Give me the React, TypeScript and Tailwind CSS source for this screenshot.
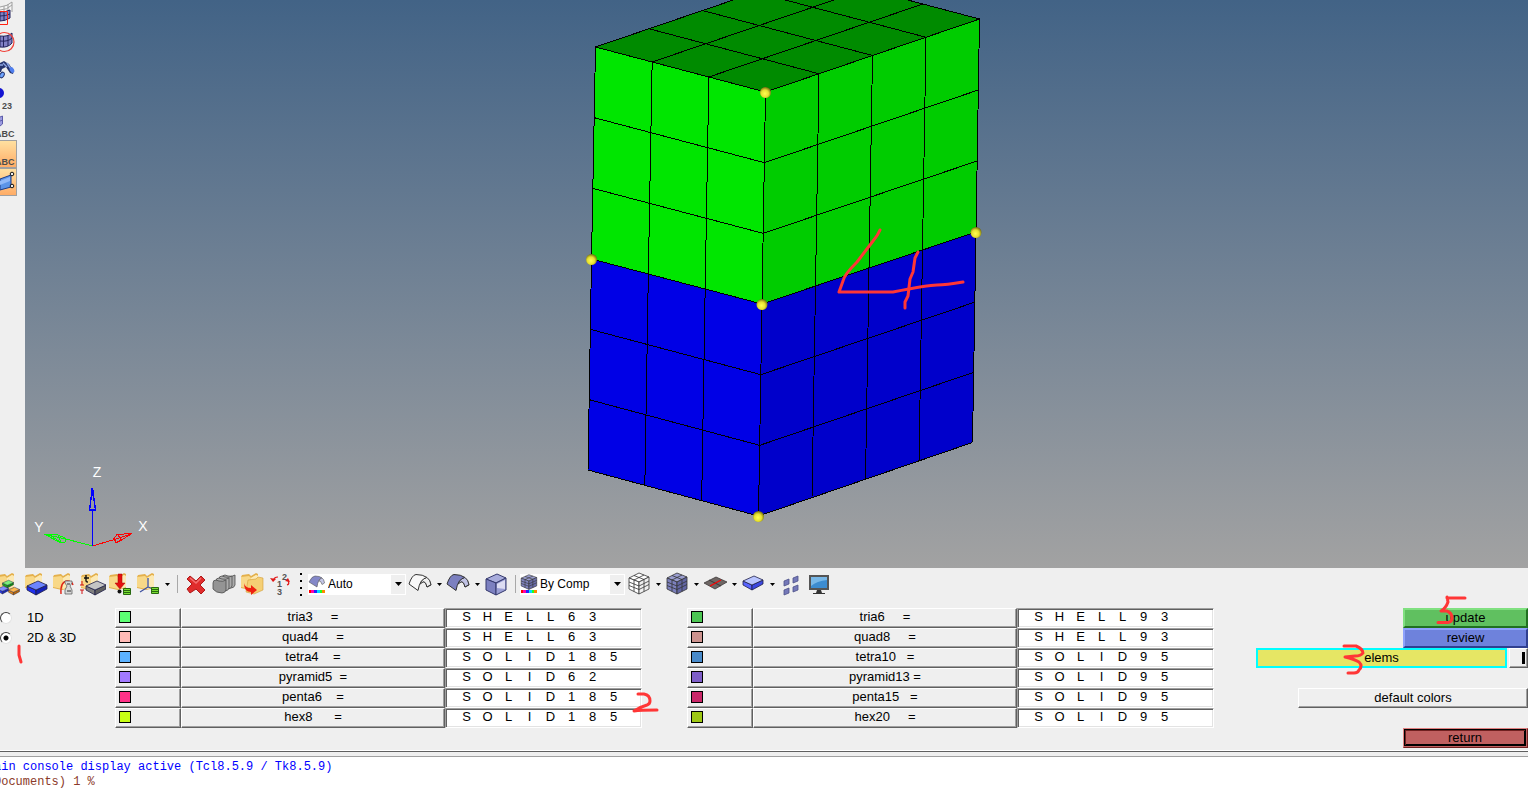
import React, { useState } from 'react'

type Point = [number, number];

interface ElementType {
    name: string;
    color: string;
    value: string;
}

const leftTypes: ElementType[] = [
    { name: "tria3", color: "bg-[#5cff74]", value: "SHELL63" },
    { name: "quad4", color: "bg-[#ffbab6]", value: "SHELL63" },
    { name: "tetra4", color: "bg-[#5cb2ff]", value: "SOLID185" },
    { name: "pyramid5", color: "bg-[#a27aff]", value: "SOLID62" },
    { name: "penta6", color: "bg-[#ff3288]", value: "SOLID185" },
    { name: "hex8", color: "bg-[#c8ff14]", value: "SOLID185" },
];

const rightTypes: ElementType[] = [
    { name: "tria6", color: "bg-[#4cc653]", value: "SHELL93" },
    { name: "quad8", color: "bg-[#cc928e]", value: "SHELL93" },
    { name: "tetra10", color: "bg-[#488aca]", value: "SOLID95" },
    { name: "pyramid13", color: "bg-[#7e5ec8]", value: "SOLID95" },
    { name: "penta15", color: "bg-[#ca2869]", value: "SOLID95" },
    { name: "hex20", color: "bg-[#9ec814]", value: "SOLID95" },
];

const raised = "border border-t-white border-l-white border-b-[#606060] border-r-[#606060] shadow-[inset_-1px_-1px_#a0a0a0]";

// ---------- mesh ----------

const mix = (a: Point, b: Point, t: number): Point => [a[0] + (b[0] - a[0]) * t, a[1] + (b[1] - a[1]) * t];

// one face of the solid: corners run a-b along the top and d-c along the bottom
const Face = ({ a, b, c, d, cols, rows, fill }: { a: Point; b: Point; c: Point; d: Point; cols: number; rows: number; fill: string }) => {
    const lines: [Point, Point][] = [];
    for (let i = 0; i <= cols; i++) lines.push([mix(a, b, i / cols), mix(d, c, i / cols)]);
    for (let j = 0; j <= rows; j++) lines.push([mix(a, d, j / rows), mix(b, c, j / rows)]);
    return (
        <g shapeRendering="crispEdges">
            <polygon points={[a, b, c, d].join(" ")} fill={fill} />
            {lines.map(([p, q], i) => (
                <line key={i} x1={p[0]} y1={p[1]} x2={q[0]} y2={q[1]} stroke="#000" />
            ))}
        </g>
    )
}

const topLeft: Point = [595.5, 47];
const topFront: Point = [765.5, 92];
const topRight: Point = [979.5, 19];
const topBack: Point = [809.5, -26];
const midLeft: Point = [591.5, 259];
const midFront: Point = [762, 304];
const midRight: Point = [976, 232];
const lowLeft: Point = [588, 470];
const lowFront: Point = [758.5, 516];
const lowRight: Point = [972.5, 442.5];

const Viewport = () => (
    <svg viewBox="25 0 1503 568" preserveAspectRatio="xMidYMid slice" className="block w-full h-full" role="img" aria-label="Mesh view">
        <defs>
            <radialGradient id="node" cx="45%" cy="60%" r="60%">
                <stop offset="0" stopColor="#ffff50" />
                <stop offset="0.55" stopColor="#e6e030" />
                <stop offset="1" stopColor="#6e6a10" />
            </radialGradient>
        </defs>
        <Face a={topLeft} b={topFront} c={topRight} d={topBack} cols={3} rows={4} fill="#008b00" />
        <Face a={topLeft} b={topFront} c={midFront} d={midLeft} cols={3} rows={3} fill="#00e600" />
        <Face a={topFront} b={topRight} c={midRight} d={midFront} cols={4} rows={3} fill="#00cc00" />
        <Face a={midLeft} b={midFront} c={lowFront} d={lowLeft} cols={3} rows={3} fill="#0000e6" />
        <Face a={midFront} b={midRight} c={lowRight} d={lowFront} cols={4} rows={3} fill="#0000cb" />
        {[topFront, midLeft, midFront, midRight, lowFront].map(([x, y], i) => (
            <circle key={i} cx={x} cy={y + 0.5} r="5.5" fill="url(#node)" />
        ))}
        {/* axis triad */}
        <g fill="none" shapeRendering="crispEdges">
            <path d="M92.5 546L64 538.500M44 534l14 1 7 3v4l-4 1zM44 534l21 5M50 535l10 7M58 535l3 7" stroke="#0f0" />
            <path d="M92.5 546L116 539M132 533.5l-15 1-3 4 2 4 3-1zM131 534l-15 5M118 535l3 4-3 3" stroke="#f00" />
            <path d="M92.5 546v-36" stroke="#00f" />
            <path d="M92.5 488l-3 22h6zM92 488v8" stroke="#00f" strokeWidth="1.4" />
        </g>
        <g fill="none" stroke="#ff3636" strokeWidth="3" strokeLinecap="round" strokeLinejoin="round">
            <path d="M880 230q-2 5-7 11l-16 21q-13 13-14 19l-4 11h54q35-7 44-7t26-3" />
            <path d="M918 252l-3 6-2 14-3 7-2 17-3 6v6" />
        </g>
        <g fill="#fff" fontFamily="Liberation Sans, sans-serif" fontSize="14" textAnchor="middle">
            <text x="97" y="477">Z</text>
            <text x="39" y="532">Y</text>
            <text x="143" y="531">X</text>
        </g>
    </svg>
)

// ---------- side bar ----------

const SideButton = ({ label, active, children }: { label: string; active?: boolean; children: React.ReactNode }) => (
    <button
        aria-label={label}
        className={`block h-7 w-[17px] overflow-hidden ${active ? "bg-linear-to-b from-[#ffe0a0] to-[#ffac66] border-y border-r border-[#a0a0a0]" : ""}`}
    >
        <svg viewBox="0 0 17 28" className="block w-[17px] h-full" preserveAspectRatio="xMinYMid slice">{children}</svg>
    </button>
)

const sideText = { fontFamily: "Liberation Sans, sans-serif", fontSize: 9, fontWeight: 700, fill: "#4c4c4c" };

const SideBar = () => (
    <aside className="w-[25px] shrink-0 bg-[#efefef]">
        <SideButton label="Window zoom">
            <path d="M0 7q8-1 12-5v13q-5 4-12 5z" fill="#f4f4f4" />
            <path d="M0 7q8-1 12-5v10M4 6v8M8 4v9M0 10q7 0 12-5" fill="none" stroke="#a0a0a0" />
            <path d="M0 12q6 0 10-2v8q-5 3-10 3z" fill="#8080c4" stroke="#24245c" />
            <path d="M4 11v10M0 16q6 0 10-2" fill="none" stroke="#24245c" />
            <path d="M0 11.500h7.500v13H0" fill="none" stroke="#ff2010" />
        </SideButton>
        <SideButton label="Circle zoom">
            <path d="M0 8q8 1 12-3v10q-4 5-12 4z" fill="#8080c4" stroke="#24245c" />
            <path d="M3.500 8v11M8 7v11M0 13q8 1 12-3" fill="none" stroke="#24245c" />
            <circle cx="4.500" cy="14" r="9.500" fill="none" stroke="#f04038" strokeWidth="1.200" />
        </SideButton>
        <SideButton label="Find">
            <path d="M0 7l4-2 3 2 2 1 2 3 3 3-1 4-3-1-4-6-4 2-1 3-1 0z" fill="#26346e" />
            <path d="M3 7l4 4M7 7l4 6M0 9h3" stroke="#8ea6e4" strokeWidth="1.400" />
            <ellipse cx="12" cy="14" rx="2" ry="3" transform="rotate(-30 12 14)" fill="#4f7ff0" />
            <ellipse cx="2" cy="19" rx="2" ry="3" transform="rotate(30 2 19)" fill="#6ea4ff" stroke="#26346e" />
        </SideButton>
        <SideButton label="Node numbers">
            <circle cx="-1" cy="9" r="5" fill="#1414d2" />
            <text x="2" y="25" {...sideText}>23</text>
        </SideButton>
        <SideButton label="Element labels">
            <path d="M0 5l2.500-1v8L0 14M0 9l3-1" fill="#9c9ce0" stroke="#5c5caa" />
            <text x="-5" y="25" {...sideText}>ABC</text>
        </SideButton>
        <SideButton label="Component labels" active>
            <text x="-5" y="25" {...sideText}>ABC</text>
        </SideButton>
        <SideButton label="Surface points" active>
            <path d="M0 11l11-4v12l-11 3z" fill="#5c94e8" stroke="#1c3c88" />
            <path d="M0 13l10-4v4L0 17z" fill="#90b8f8" />
            <circle cx="12" cy="6" r="1.800" fill="#eee" stroke="#111" />
            <circle cx="12" cy="18" r="1.800" fill="#eee" stroke="#111" />
        </SideButton>
    </aside>
)

// ---------- tool bar ----------

const Folder = () => (
    <>
        <path d="M3 5l1-2 7-1 2 2 5-3 2 1v14l-8 2-9-2z" fill="#e4b04c" />
        <path d="M3 5l8-1 2 2 5-3 2 1v11l-8 2-9-2z" fill="#f8d888" />
        <path d="M13 6l5-3 2 1v11l-7 2z" fill="#fce9b4" />
    </>
)

const Slab = ({ x, y, s = 1, top, left, right }: { x: number; y: number; s?: number; top: string; left: string; right: string }) => (
    <g transform={`translate(${x} ${y}) scale(${s})`} stroke="#202048" strokeWidth="0.800" strokeLinejoin="round">
        <path d="M-10 0v4l9 5V4z" fill={left} />
        <path d="M-1 4v5l11-6v-4z" fill={right} />
        <path d="M-10 0L1-5l9 4L-1 4z" fill={top} />
    </g>
)

const MeshCube = ({ top, left, right }: { top: string; left: string; right: string }) => (
    <g stroke="#333" strokeWidth="0.800" strokeLinejoin="round">
        <path d="M4 6l10-5 10 4-10 5z" fill={top} />
        <path d="M4 6l10 4v12L4 17z" fill={left} />
        <path d="M14 10l10-5v12l-10 5z" fill={right} />
        <path d="M9 3.500l10 4v12M19 3L9 8v11.500M4 10l10 4 10-5M4 13.500l10 4 10-5" fill="none" />
    </g>
)

const Surface = ({ fill, inner }: { fill: string; inner: string }) => (
    <g stroke="#333" strokeLinejoin="round">
        <path d="M14 12q3-7 7-6 3 2 4 7l-4 2q-1-6-4-5z" fill={inner} />
        <path d="M3 12Q6 3 10 2.500q7 0 11 3-7 1-9 13z" fill={fill} />
        <path d="M21 5.500q3 2 4 7l-4 2.500q-1-5-3.500-5.500" fill={inner} />
    </g>
)

const IconButton = ({ label, children }: { label: string; children: React.ReactNode }) => (
    <button aria-label={label} className="w-7 h-6 shrink-0">
        <svg viewBox="0 0 28 24" className="block w-7 h-6">{children}</svg>
    </button>
)

const MoreButton = ({ label }: { label: string }) => (
    <button aria-label={label} className="flex w-2.5 h-6 shrink-0 items-center justify-center">
        <svg viewBox="0 0 5 3" className="w-[5px] h-[3px]"><path d="M0 0h5L2.500 3z" /></svg>
    </button>
)

const Separator = () => (
    <div className="flex w-2.5 shrink-0 justify-center"><div className="w-px h-[18px] bg-[#a8a8a8]" /></div>
)

const Combo = ({ label, option, width, children }: { label: string; option: string; width: string; children: React.ReactNode }) => (
    <div className={`relative shrink-0 flex h-[21px] bg-white ${width}`}>
        <select aria-label={label} className="appearance-none w-full h-full pl-5 text-[12px] outline-none">
            <option>{option}</option>
        </select>
        <svg viewBox="0 0 18 20" className="absolute left-0 top-0 w-[18px] h-5 pointer-events-none">
            {children}
            <path d="M1 16h2v3H1z" fill="#f00" />
            <path d="M3 16h3v3H3z" fill="#f0a" />
            <path d="M6 16h3v3H6z" fill="#22f" />
            <path d="M9 16h3v3H9z" fill="#0df" />
            <path d="M12 16h2v3h-2z" fill="#2f2" />
            <path d="M14 16h3v3h-3z" fill="#f80" />
        </svg>
        <span className="absolute right-px inset-y-px w-3.5 bg-[#efefef] flex items-center justify-center pointer-events-none">
            <svg viewBox="0 0 7 4" className="w-[7px] h-1"><path d="M0 0h7L3.500 4z" /></svg>
        </span>
    </div>
)

const ToolBar = () => (
    <div className="flex items-center h-8 -ml-1.5 shrink-0">
        <IconButton label="Assemblies">
            <Folder />
            <Slab x={14} y={11} s={0.55} top="#7cf07c" left="#18b018" right="#109010" />
            <Slab x={9} y={17} s={0.55} top="#8090ff" left="#2838e8" right="#1a28b0" />
            <Slab x={20} y={18} s={0.55} top="#ffb850" left="#e08818" right="#b86808" />
        </IconButton>
        <IconButton label="Components">
            <Folder />
            <Slab x={15} y={14} top="#6c84ff" left="#2030f0" right="#1420b8" />
        </IconButton>
        <IconButton label="Materials">
            <Folder />
            <path d="M11 22q-1-12 6-13 5 0 6 4" fill="none" stroke="#e02418" strokeWidth="1.400" />
            <path d="M15 9h7v2l-2 3 2 4v4h-7v-4l2-4-2-3z" fill="#d8d8d8" stroke="#555" strokeWidth="0.700" />
            <path d="M17 12h3M17 19h4" stroke="#333" />
        </IconButton>
        <IconButton label="Properties">
            <Folder />
            <Slab x={18} y={14} top="#c4c4c4" left="#808080" right="#606060" />
            <path d="M6 6h5M8 3v6q0 1 2 1" fill="none" stroke="#111" strokeWidth="1.400" />
            <path d="M2 13h4M2 18h4M4 9v4M4 18v4" stroke="#d01010" />
        </IconButton>
        <IconButton label="Load collectors">
            <Folder />
            <path d="M12 2h4v9h3l-5 6-5-6h3z" fill="#e41010" stroke="#a00" strokeWidth="0.500" />
            <circle cx="13.500" cy="19.500" r="2" fill="#111" />
            <path d="M17.500 16.500h7v6h-7z" fill="#78dc30" stroke="#286810" />
            <path d="M18 18.500h6M18 20.500h6" stroke="#286810" />
        </IconButton>
        <IconButton label="System collectors">
            <Folder />
            <path d="M14 6v9l-8 5M14 15l9 3" fill="none" stroke="#3d50a0" strokeWidth="1.300" />
            <path d="M17.500 15.500h7v6h-7z" fill="#78dc30" stroke="#286810" />
            <path d="M18 17.500h6M18 19.500h6" stroke="#286810" />
        </IconButton>
        <MoreButton label="More collectors" />
        <Separator />
        <IconButton label="Delete">
            <path d="M8 4l6 5 5-5 4 4-5 5 5 5-4 4-5-5-6 4-3-4 5-5-5-5z" fill="#e02c2c" stroke="#b01818" strokeLinejoin="round" />
            <path d="M8 6l6 5 5-5" fill="none" stroke="#f47070" strokeWidth="1.500" />
        </IconButton>
        <IconButton label="Card edit">
            {[[9, -2], [6, -1], [3, 1], [0, 3]].map(([x, y], i) => (
                <path key={i} transform={`translate(${x} ${y})`} d="M3 8q0-3 3-3l3 1q4 1 7-1v10q-1 3-4 3-6 0-9-4z" fill={i === 3 ? "#949494" : "#acacac"} stroke="#4c4c4c" strokeWidth="0.800" />
            ))}
        </IconButton>
        <IconButton label="Organize">
            <Folder />
            <path d="M10 8l8-1 2-2 5 1v12l-9 4-8-2z" fill="#f5cf74" stroke="#d29c38" strokeWidth="0.600" />
            <path d="M6 11q1 5 7 5v-3l6 5-6 5v-3Q6 20 6 11z" fill="#ee2010" />
        </IconButton>
        <IconButton label="Renumber">
            <g fontFamily="Liberation Sans, sans-serif" fontSize="9" fontWeight="700" fill="#555">
                <text x="16" y="8">2</text>
                <text x="11" y="15">1</text>
                <text x="11" y="23">3</text>
            </g>
            <path d="M12 5q-4 0-5 4M21 13q3-1 1-4" fill="none" stroke="#e01818" strokeWidth="1.200" />
            <path d="M4 6l6 1-3 3zM19 9l3-3 2 4z" fill="#e01818" />
        </IconButton>
        <div className="w-3.5 shrink-0 flex flex-col items-center gap-[5px]">
            <div className="size-0.5 bg-black" />
            <div className="size-0.5 bg-black" />
            <div className="size-0.5 bg-black" />
            <div className="size-0.5 bg-black" />
        </div>
        <Combo label="Geometry color mode" option="Auto" width="w-[98px]">
            <path d="M1 8q3-6 6-6 5 0 7 2-4 1-5 9z" fill="#8488c8" stroke="#555" strokeWidth="0.600" />
            <path d="M14 4q2 1 2.500 5l-2.500 1.500q-1-4-3-3.500 1-3 3-3z" fill="#c4c6e8" stroke="#555" strokeWidth="0.600" />
        </Combo>
        <IconButton label="Wireframe geometry"><Surface fill="#f8f8f8" inner="#efefef" /></IconButton>
        <MoreButton label="Wireframe geometry options" />
        <IconButton label="Shaded geometry"><Surface fill="#7c80c0" inner="#c0c2e4" /></IconButton>
        <MoreButton label="Shaded geometry options" />
        <IconButton label="Transparency">
            <g stroke="#34386c" strokeLinejoin="round">
                <path d="M4 7l11-5 9 4-10 5z" fill="#a8acdc" />
                <path d="M4 7l10 4v12L4 18z" fill="#7c80c0" />
                <path d="M14 11l10-5v12l-10 5z" fill="#9a9ed4" />
                <path d="M15 12l8-4v9l-8-1z" fill="#dcdcf2" stroke="none" />
            </g>
        </IconButton>
        <Separator />
        <Combo label="Element color mode" option="By Comp" width="w-[105px]">
            <g transform="translate(-2 0) scale(0.78 0.7)">
                <MeshCube top="#9a9ed0" left="#8084c0" right="#6a6eac" />
            </g>
        </Combo>
        <IconButton label="Wireframe elements"><MeshCube top="#fff" left="#fff" right="#f0f0f0" /></IconButton>
        <MoreButton label="Wireframe element options" />
        <IconButton label="Shaded elements"><MeshCube top="#9a9ed0" left="#7c80bc" right="#6266a4" /></IconButton>
        <MoreButton label="Shaded element options" />
        <IconButton label="Feature lines">
            <path d="M3 11l12-6 11 5-12 7z" fill="#6e6664" stroke="#3c3838" strokeWidth="0.800" />
            <path d="M8 8l12 6" stroke="#3c3838" />
            <path d="M9 14l11-6" stroke="#f00" strokeWidth="1.200" />
        </IconButton>
        <MoreButton label="Feature line options" />
        <IconButton label="Element representation">
            <Slab x={14} y={9} top="#b8c4ff" left="#5864ff" right="#3c48e0" />
        </IconButton>
        <MoreButton label="Element representation options" />
        <IconButton label="Shrink elements">
            {[[7, 8], [16, 5], [7, 17], [16, 14]].map(([x, y], i) => (
                <path key={i} transform={`translate(${x} ${y})`} d="M0 1l5-2v5l-5 2z" fill="#7478b8" stroke="#4c5088" strokeWidth="0.800" />
            ))}
        </IconButton>
        <IconButton label="Visualization options">
            <path d="M4 3h20v15H4z" fill="#555" />
            <path d="M6 5h16v11H6z" fill="#3c8cd0" />
            <path d="M6 5h16v3Q12 9 6 14z" fill="#78b8e8" />
            <path d="M12 18h4l1 3h3v1H8v-1h3z" fill="#333" />
        </IconButton>
    </div>
)

// ---------- element type panel ----------

const TypeColumn = ({ types }: { types: ElementType[] }) => (
    <div className="flex flex-col">
        {types.map((type) => (
            <div key={type.name} className="grid h-5 grid-cols-[66px_264px_197px]">
                <button aria-label={`${type.name} color`} className={`flex items-start pl-[3px] pt-0.5 ${raised}`}>
                    <span className={`size-3 border border-black ${type.color}`} />
                </button>
                <label htmlFor={`${type.name}-0`} className={`text-center whitespace-pre leading-4 ${raised}`}>
                    {type.name.padEnd(10) + "="}
                </label>
                <div className="flex items-start bg-white pl-2.5 border border-t-[#a0a0a0] border-l-[#a0a0a0] border-b-white border-r-white shadow-[inset_1px_1px_#606060,inset_-1px_-1px_#e3e3e3]">
                    {type.value.split("").map((char, i) => (
                        <input
                            key={i}
                            id={`${type.name}-${i}`}
                            aria-label={`${type.name} character ${i + 1}`}
                            maxLength={1}
                            defaultValue={char}
                            className="w-[21px] h-4 leading-4 text-center bg-transparent outline-none"
                        />
                    ))}
                </div>
            </div>
        ))}
    </div>
)

const App = () => {
    const [dimension, setDimension] = useState("2D & 3D");

    return (
        <div className="flex flex-col h-screen overflow-hidden bg-[#efefef] text-black text-[13px] font-['Liberation_Sans',sans-serif]">
            <div className="flex flex-1 min-h-0">
                <SideBar />
                <main className="flex-1 min-w-0 bg-linear-to-b from-[#426386] to-[#a2a2a2]">
                    <Viewport />
                </main>
            </div>

            <ToolBar />

            <section className="relative flex shrink-0 pt-2 pb-0.5">
                <div className="w-[115px] shrink-0">
                    {["1D", "2D & 3D"].map((option) => (
                        <label key={option} className="flex items-center h-5 gap-[15px]">
                            <input
                                type="radio"
                                name="dimension"
                                checked={dimension === option}
                                onChange={() => setDimension(option)}
                                className="appearance-none size-3 rounded-full bg-white border border-t-[#404040] border-l-[#404040] border-b-[#e3e3e3] border-r-[#e3e3e3] checked:bg-[radial-gradient(circle,#000_2px,#fff_3px)]"
                            />
                            {option}
                        </label>
                    ))}
                </div>
                <div className="flex gap-[45px]">
                    <TypeColumn types={leftTypes} />
                    <TypeColumn types={rightTypes} />
                </div>

                <div className="relative ml-auto w-[272px] shrink-0 flex flex-col items-end">
                    <button className="h-5 w-[125px] bg-[#60c060] border-2 border-t-[#80e080] border-l-[#80e080] border-b-[#207020] border-r-[#207020] leading-4">update</button>
                    <button className="h-5 w-[125px] bg-[#6e82dc] border-2 border-t-[#8ea2fc] border-l-[#8ea2fc] border-b-[#304090] border-r-[#304090] leading-4">review</button>
                    <div className="flex w-full h-5 gap-0.5">
                        <button className="w-[251px] bg-[#e6e664] border-2 border-[#00ffff] leading-4">elems</button>
                        <button aria-label="Reset selection" className={`flex-1 flex items-center justify-end pr-0.5 ${raised}`}>
                            <span className="w-[3px] h-3 bg-black" />
                        </button>
                    </div>
                    <button className={`mt-5 h-5 w-[230px] leading-4 ${raised}`}>default colors</button>
                    <button className="mt-5 h-5 w-[125px] bg-[#c06060] border border-t-[#e08080] border-l-[#e08080] border-b-[#702020] border-r-[#702020] pr-px pb-px">
                        <span className="block border border-black leading-[15px] shadow-[inset_1px_1px_#702020,inset_-1px_-1px_#000]">return</span>
                    </button>
                    <svg viewBox="1256 608 272 140" className="absolute left-0 top-0 w-[272px] h-[140px] overflow-visible pointer-events-none" fill="none" stroke="#ff3636" strokeWidth="3" strokeLinecap="round" strokeLinejoin="round">
                        <path d="M1465 598h-18v-1l1 5q-2 6-7 9h6q5 2 5 7 0 4-4 4.500h-10" />
                        <path d="M1344 646h12q7 3 7 7-2 3-8 3l-10 1q9 2 14 5 4 4 0 8-1 3-5 3h-6" />
                    </svg>
                </div>

                <svg viewBox="0 600 680 150" className="absolute left-0 top-0 w-[680px] h-[150px] pointer-events-none" fill="none" stroke="#ff3636" strokeWidth="3" strokeLinecap="round" strokeLinejoin="round">
                    <path d="M19 646v9l2 7" />
                    <path d="M638 694h6q6 1 6 7 0 3-3 4-7 2-13 6 6-1 23-1" />
                </svg>
            </section>

            <div className="h-[7px] shrink-0 border-t border-b border-t-white border-b-[#a0a0a0]">
                <div className="h-px bg-[#606060]" />
            </div>
            <output className="block h-[41px] shrink-0 overflow-hidden bg-white pt-[3px] text-[12px] leading-[15px] font-['Liberation_Mono',monospace] whitespace-pre">
                <span className="block -ml-1.5 text-[#0000ff]">ain console display active (Tcl8.5.9 / Tk8.5.9)</span>
                <span className="block -ml-1.5 text-[#8b3a2a]">Documents) 1 %</span>
            </output>
        </div>
    )
}

export default App
